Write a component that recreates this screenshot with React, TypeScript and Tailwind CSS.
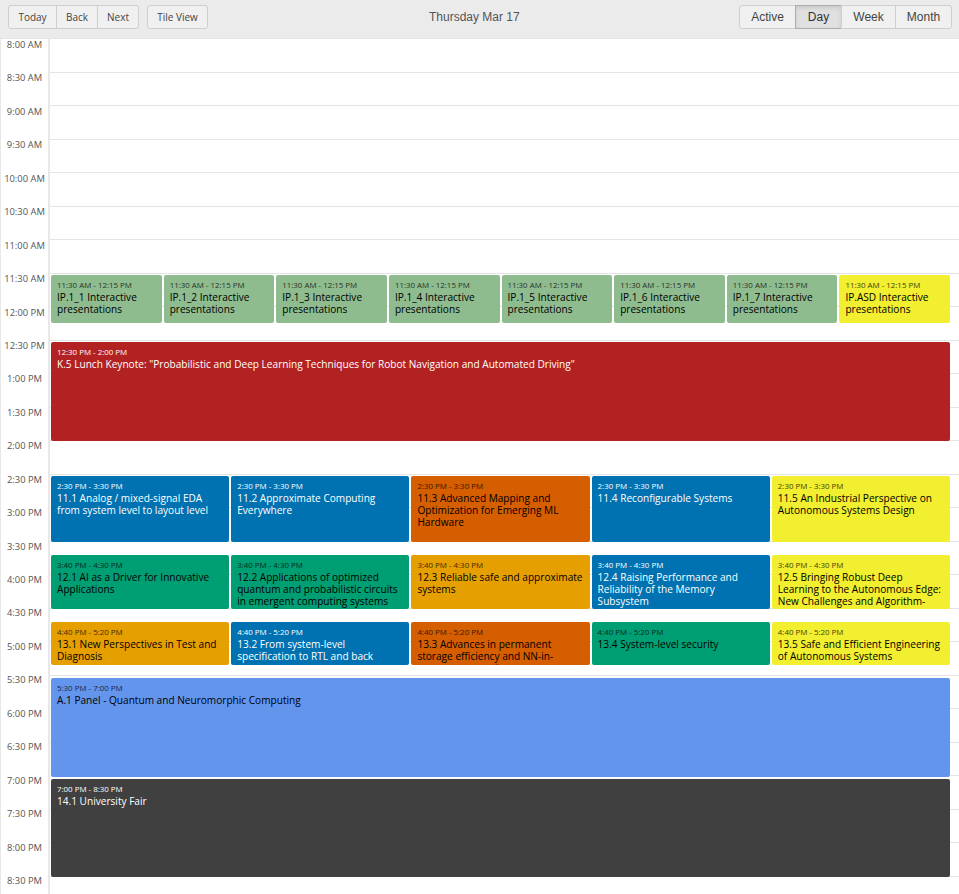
const hours = [
  "8:00 AM", "8:30 AM", "9:00 AM", "9:30 AM", "10:00 AM", "10:30 AM", "11:00 AM", "11:30 AM",
  "12:00 PM", "12:30 PM", "1:00 PM", "1:30 PM", "2:00 PM", "2:30 PM", "3:00 PM", "3:30 PM",
  "4:00 PM", "4:30 PM", "5:00 PM", "5:30 PM", "6:00 PM", "6:30 PM", "7:00 PM", "7:30 PM",
  "8:00 PM", "8:30 PM",
];

const sage = "bg-[#8fbc8f] text-black";
const lemon = "bg-[#f1ef2f] text-black";
const blue = "bg-[#0072b2] text-white";
const rust = "bg-[#d55e00] text-black";
const teal = "bg-[#009e73] text-black";
const amber = "bg-[#e69f00] text-black";

type CalEvent = { time: string; title: string; color: string };

function ip(n: string, color = sage): CalEvent {
  return { time: "11:30 AM - 12:15 PM", title: `IP.${n} Interactive presentations`, color };
}

const rows: { className: string; cols: string; events: CalEvent[] }[] = [
  {
    className: "mt-[236px] h-[48px]",
    cols: "grid-cols-8",
    events: [ip("1_1"), ip("1_2"), ip("1_3"), ip("1_4"), ip("1_5"), ip("1_6"), ip("1_7"), ip("ASD", lemon)],
  },
  {
    className: "mt-[19px] h-[99px]",
    cols: "grid-cols-1",
    events: [
      {
        time: "12:30 PM - 2:00 PM",
        title: 'K.5 Lunch Keynote: "Probabilistic and Deep Learning Techniques for Robot Navigation and Automated Driving"',
        color: "bg-[#b22222] text-white",
      },
    ],
  },
  {
    className: "mt-[35px] h-[66px]",
    cols: "grid-cols-5",
    events: [
      { time: "2:30 PM - 3:30 PM", title: "11.1 Analog / mixed-signal EDA from system level to layout level", color: blue },
      { time: "2:30 PM - 3:30 PM", title: "11.2 Approximate Computing Everywhere", color: blue },
      { time: "2:30 PM - 3:30 PM", title: "11.3 Advanced Mapping and Optimization for Emerging ML Hardware", color: rust },
      { time: "2:30 PM - 3:30 PM", title: "11.4 Reconfigurable Systems", color: blue },
      { time: "2:30 PM - 3:30 PM", title: "11.5 An Industrial Perspective on Autonomous Systems Design", color: lemon },
    ],
  },
  {
    className: "mt-[13px] h-[54px]",
    cols: "grid-cols-5",
    events: [
      { time: "3:40 PM - 4:30 PM", title: "12.1 AI as a Driver for Innovative Applications", color: teal },
      { time: "3:40 PM - 4:30 PM", title: "12.2 Applications of optimized quantum and probabilistic circuits in emergent computing systems", color: teal },
      { time: "3:40 PM - 4:30 PM", title: "12.3 Reliable safe and approximate systems", color: amber },
      { time: "3:40 PM - 4:30 PM", title: "12.4 Raising Performance and Reliability of the Memory Subsystem", color: blue },
      { time: "3:40 PM - 4:30 PM", title: "12.5 Bringing Robust Deep Learning to the Autonomous Edge: New Challenges and Algorithm-Hardware Solutions", color: lemon },
    ],
  },
  {
    className: "mt-[13px] h-[43px]",
    cols: "grid-cols-5",
    events: [
      { time: "4:40 PM - 5:20 PM", title: "13.1 New Perspectives in Test and Diagnosis", color: amber },
      { time: "4:40 PM - 5:20 PM", title: "13.2 From system-level specification to RTL and back", color: blue },
      { time: "4:40 PM - 5:20 PM", title: "13.3 Advances in permanent storage efficiency and NN-in-memory computing", color: rust },
      { time: "4:40 PM - 5:20 PM", title: "13.4 System-level security", color: teal },
      { time: "4:40 PM - 5:20 PM", title: "13.5 Safe and Efficient Engineering of Autonomous Systems", color: lemon },
    ],
  },
  {
    className: "mt-[13px] h-[99px]",
    cols: "grid-cols-1",
    events: [
      { time: "5:30 PM - 7:00 PM", title: "A.1 Panel - Quantum and Neuromorphic Computing", color: "bg-[#6495ed] text-black" },
    ],
  },
  {
    className: "mt-[2px] h-[98px]",
    cols: "grid-cols-1",
    events: [{ time: "7:00 PM - 8:30 PM", title: "14.1 University Fair", color: "bg-[#404040] text-white" }],
  },
];

function ToolButton({ label, className }: { label: string; className: string }) {
  return (
    <button className={`h-[24px] border border-[#cfcfcf] bg-[#f0f0f0] text-[#444] ${className}`}>
      {label}
    </button>
  );
}

function Toolbar() {
  return (
    <header className="relative flex h-[38px] items-start justify-between bg-[#ebebeb] pt-[5px] pr-[7px] pl-[8px] font-['Open_Sans',sans-serif] text-[10px]">
      <div className="flex gap-[8px]">
        <div className="flex">
          <ToolButton label="Today" className="w-[49px] rounded-l-[3px]" />
          <ToolButton label="Back" className="-ml-px w-[42px]" />
          <ToolButton label="Next" className="-ml-px w-[42px] rounded-r-[3px]" />
        </div>
        <ToolButton label="Tile View" className="w-[61px] rounded-[3px]" />
      </div>
      <h1 className="absolute top-0 left-[429px] font-['Liberation_Sans',sans-serif] text-[12px] leading-[34px] text-[#555]">
        Thursday Mar 17
      </h1>
      <div className="flex font-['Liberation_Sans',sans-serif] text-[12px]">
        <ToolButton label="Active" className="w-[57px] rounded-l-[3px]" />
        <button className="-ml-px h-[24px] w-[47px] border border-[#adadad] bg-[#e0e0e0] text-[#333] shadow-[inset_0_2px_4px_rgba(0,0,0,0.1)]">
          Day
        </button>
        <ToolButton label="Week" className="-ml-px w-[55px]" />
        <ToolButton label="Month" className="-ml-px w-[57px] rounded-r-[3px]" />
      </div>
    </header>
  );
}

function EventCard({ event }: { event: CalEvent }) {
  const timeTone = event.color.includes("text-white") ? "opacity-100" : "opacity-75";
  return (
    <div className={`h-full min-w-0 overflow-hidden rounded-[2px] px-[6px] pt-[4px] ${event.color}`}>
      <div className={`text-[7.9px] leading-[12px] ${timeTone}`}>{event.time}</div>
      <div className="text-[10.1px] leading-[12px]">{event.title}</div>
    </div>
  );
}

export default function App() {
  return (
    <div className="h-[894px] w-[959px] overflow-hidden bg-white font-['Open_Sans',sans-serif]">
      <Toolbar />
      <div className="relative flex h-[856px] border-t border-[#e4e4e4]">
        {/* gutter rows are a touch shorter than the grid rows */}
        <div className="flex w-[50px] shrink-0 flex-col border-r-2 border-l border-[#e8e8e8]">
          {hours.map((hour) => (
            <div key={hour} className="h-[33.44px] shrink-0 text-center text-[9.4px] leading-[12px] text-[#555]">
              {hour}
            </div>
          ))}
        </div>
        <div className="flex flex-1 flex-col">
          {hours.map((hour) => (
            <div key={hour} className="h-[33.5px] shrink-0 border-b border-[#e4e4e4]" />
          ))}
        </div>
        {/* events sit on top of the hour lines */}
        <div className="absolute top-0 left-[51px] flex w-[899px] flex-col">
          {rows.map((row) => (
            <div key={row.className} className={`grid shrink-0 gap-[2px] ${row.cols} ${row.className}`}>
              {row.events.map((event) => (
                <EventCard key={event.title} event={event} />
              ))}
            </div>
          ))}
        </div>
      </div>
    </div>
  );
}
